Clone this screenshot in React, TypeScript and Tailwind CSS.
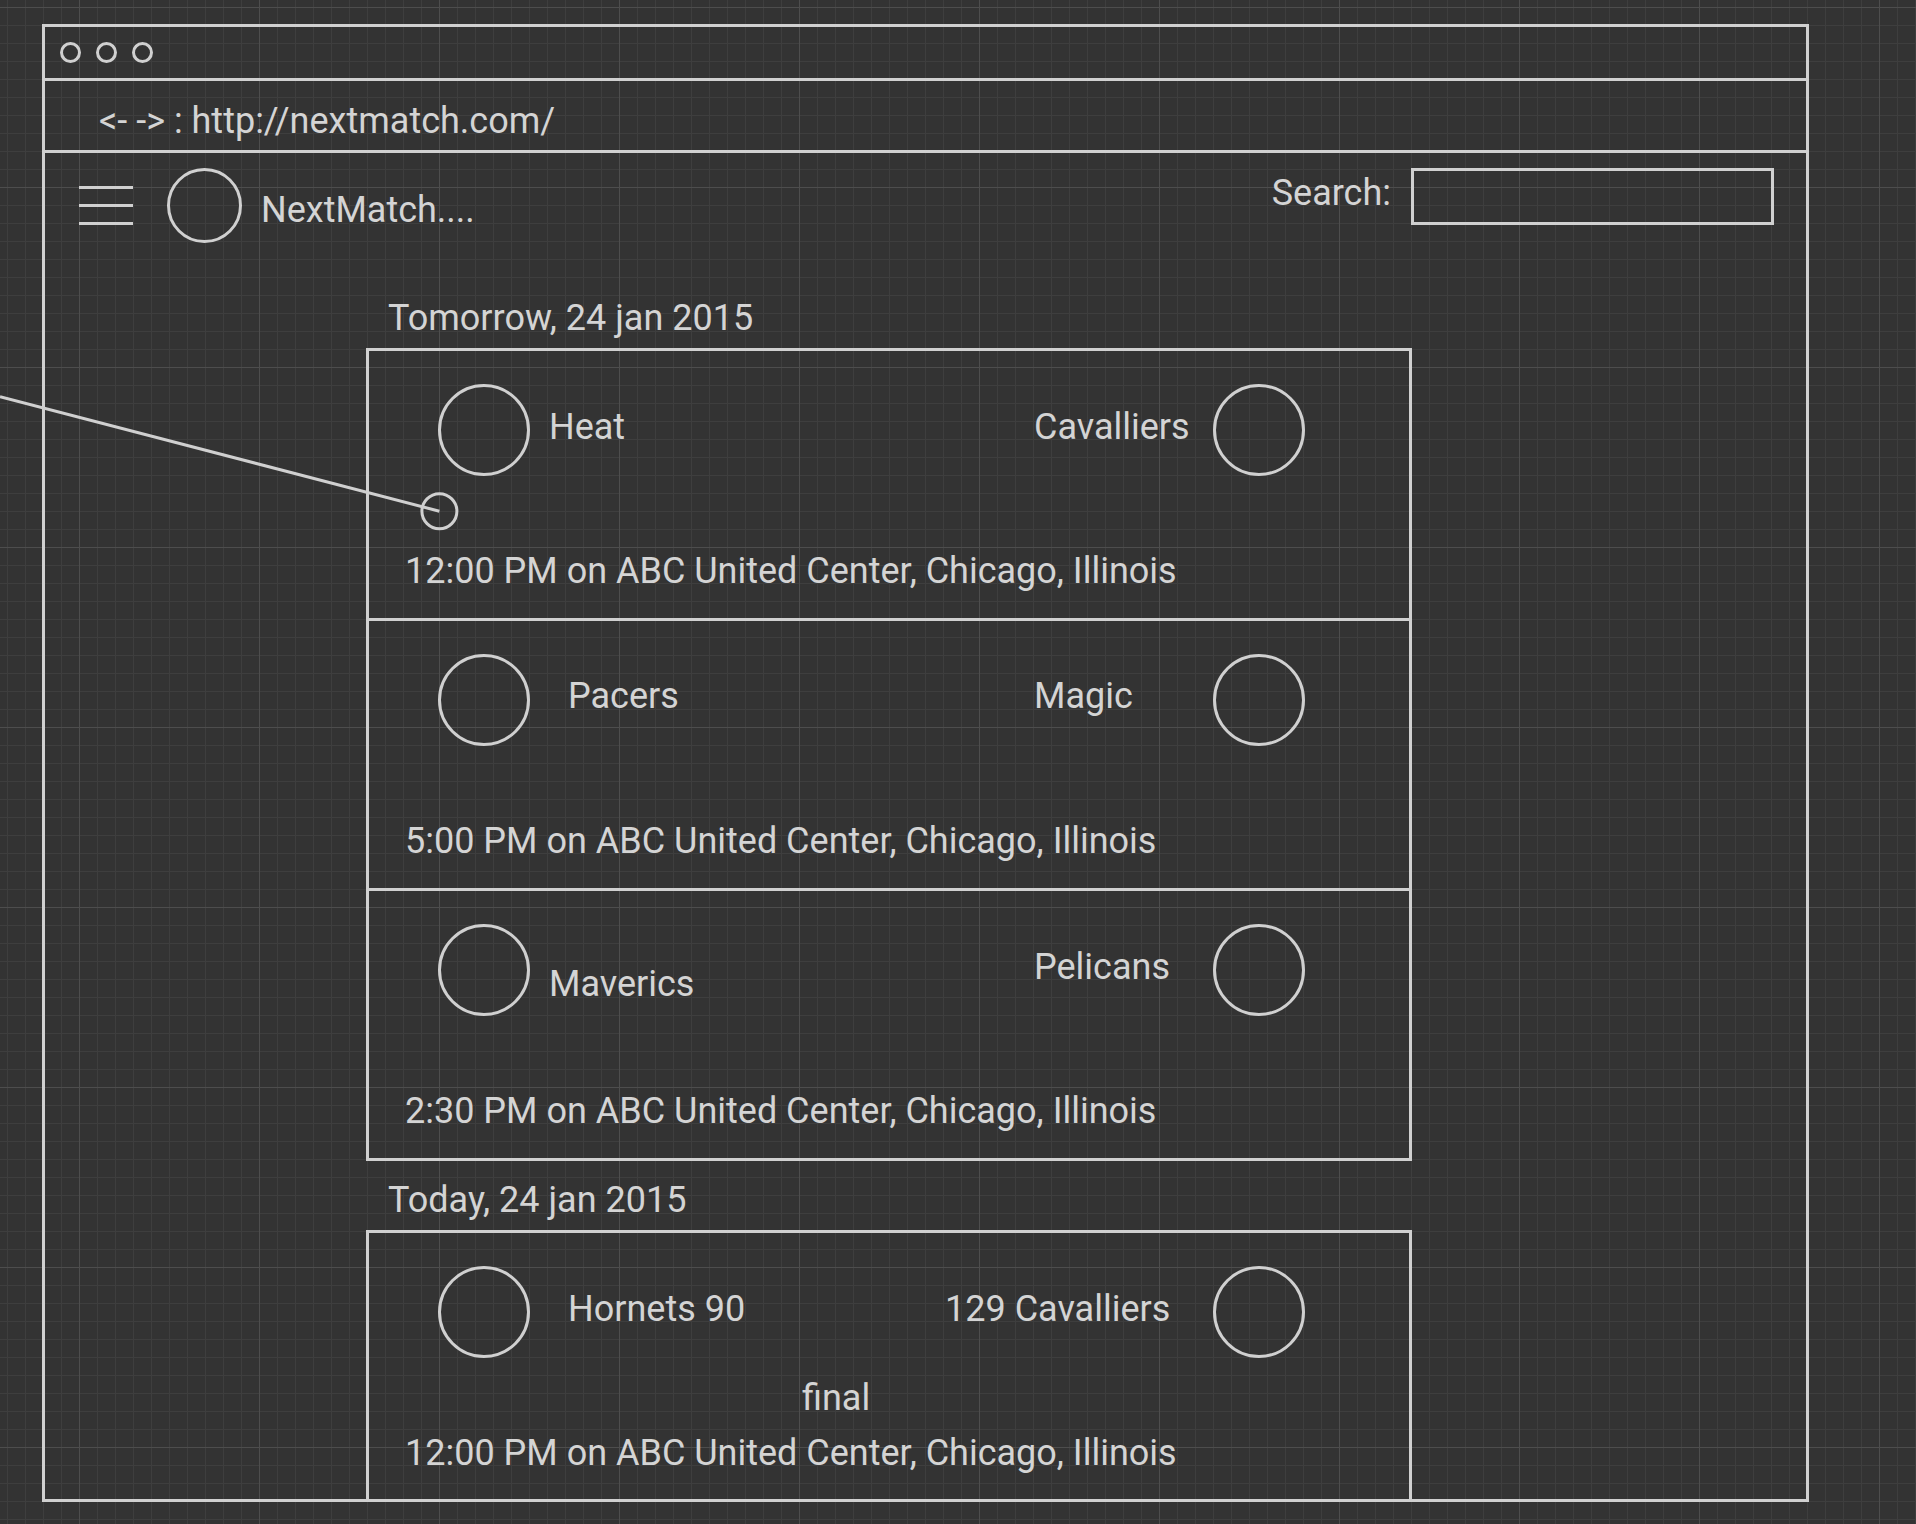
const games = [
  {
    left: "Heat",
    leftCls: "ml-[19px] mt-[58px]",
    right: "Cavalliers",
    rightCls: "mt-[58px]",
    foot: "12:00 PM on ABC United Center, Chicago, Illinois",
  },
  {
    left: "Pacers",
    leftCls: "ml-[38px] mt-[57px]",
    right: "Magic",
    rightCls: "mt-[57px]",
    foot: "5:00 PM on ABC United Center, Chicago, Illinois",
  },
  {
    left: "Maverics",
    leftCls: "ml-[19px] mt-[75px]",
    right: "Pelicans",
    rightCls: "mt-[58px]",
    foot: "2:30 PM on ABC United Center, Chicago, Illinois",
  },
];

function Logo() {
  return <div className="mt-[33px] size-[92px] shrink-0 rounded-full border-[3px] border-[#d0d0d0]" />;
}

function GameRow({ g }: { g: (typeof games)[number] }) {
  return (
    <div className="flex flex-col pb-[29px]">
      <div className="flex h-[202px] items-start">
        <div className="flex w-[665px] items-start pl-[69px]">
          <Logo />
          <span className={g.leftCls}>{g.left}</span>
        </div>
        <span className={g.rightCls}>{g.right}</span>
        <div className="ml-auto mr-[104px]">
          <Logo />
        </div>
      </div>
      <div className="pl-[36px]">{g.foot}</div>
    </div>
  );
}

export default function App() {
  return (
    <div className="relative h-[1524px] w-[1916px] overflow-hidden bg-[#333333] bg-[linear-gradient(to_right,#4d4d4d_1px,transparent_1px),linear-gradient(to_bottom,#4d4d4d_1px,transparent_1px),linear-gradient(to_right,#3e3e3e_1px,transparent_1px),linear-gradient(to_bottom,#3e3e3e_1px,transparent_1px)] bg-size-[180px_180px,180px_180px,18px_18px,18px_18px] bg-position-[79px_0,0_7px,7px_0,0_7px] font-['Roboto',sans-serif] text-[36px] leading-none text-[#d4d4d4]">
      {/* browser frame */}
      <div className="ml-[42px] mt-[24px] flex h-[1478px] w-[1767px] flex-col border-[3px] border-[#d0d0d0]">
        {/* title bar */}
        <div className="flex h-[54px] shrink-0 items-center gap-[15px] border-b-[3px] border-[#d0d0d0] pl-[15px]">
          <div className="size-[21px] rounded-full border-[3px] border-[#d0d0d0]" />
          <div className="size-[21px] rounded-full border-[3px] border-[#d0d0d0]" />
          <div className="size-[21px] rounded-full border-[3px] border-[#d0d0d0]" />
        </div>

        {/* address bar */}
        <div className="h-[72px] shrink-0 border-b-[3px] border-[#d0d0d0] pl-[54px] pt-[22px]">
          {"<- -> : http://nextmatch.com/"}
        </div>

        {/* navbar */}
        <div className="flex h-[90px] shrink-0 items-start">
          <div className="ml-[34px] mt-[33px] flex w-[54px] flex-col gap-[15px]">
            <div className="h-[3px] bg-[#d0d0d0]" />
            <div className="h-[3px] bg-[#d0d0d0]" />
            <div className="h-[3px] bg-[#d0d0d0]" />
          </div>
          <div className="ml-[34px] mt-[15px] size-[75px] rounded-full border-[3px] border-[#d0d0d0]" />
          <span className="ml-[19px] mt-[39px]">NextMatch....</span>
          <span className="ml-auto mt-[22px]">Search:</span>
          <div className="ml-[20px] mr-[32px] mt-[15px] h-[57px] w-[363px] border-[3px] border-[#d0d0d0]" />
        </div>

        {/* schedule */}
        <div className="ml-[321px] flex w-[1046px] flex-1 flex-col">
          <div className="mb-[12px] mt-[57px] pl-[22px]">Tomorrow, 24 jan 2015</div>
          <div className="divide-y-[3px] divide-[#d0d0d0] border-[3px] border-[#d0d0d0]">
            {games.map((g) => (
              <GameRow key={g.left} g={g} />
            ))}
          </div>

          <div className="mb-[12px] mt-[21px] pl-[22px]">Today, 24 jan 2015</div>
          <div className="flex flex-1 flex-col border-x-[3px] border-t-[3px] border-[#d0d0d0]">
            <div className="flex h-[147px] items-start">
              <div className="flex w-[576px] items-start pl-[69px]">
                <Logo />
                <span className="ml-[38px] mt-[58px]">Hornets 90</span>
              </div>
              <span className="mt-[58px]">129 Cavalliers</span>
              <div className="ml-auto mr-[104px]">
                <Logo />
              </div>
            </div>
            <div className="pl-[433px]">final</div>
            <div className="mt-[19px] pl-[36px]">12:00 PM on ABC United Center, Chicago, Illinois</div>
          </div>
        </div>
      </div>

      {/* annotation connector */}
      <svg className="pointer-events-none absolute left-0 top-0" width="1916" height="1524">
        <line x1="0" y1="396.7" x2="439.4" y2="511.2" stroke="#d0d0d0" strokeWidth="3" />
        <circle cx="439.4" cy="511.2" r="17.5" fill="none" stroke="#d0d0d0" strokeWidth="3" />
      </svg>
    </div>
  );
}
